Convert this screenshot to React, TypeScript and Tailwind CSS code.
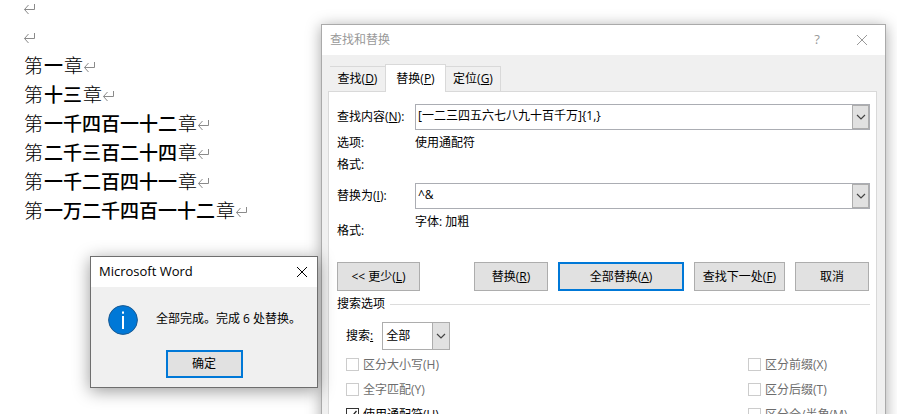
import { useState } from 'react';
import type { ReactNode } from 'react';

// each part is [text, bold]
const lines: [string, boolean][][] = [
  [],
  [],
  [['第', false], ['一', true], ['章', false]],
  [['第', false], ['十三', true], ['章', false]],
  [['第', false], ['一千四百一十二', true], ['章', false]],
  [['第', false], ['二千三百二十四', true], ['章', false]],
  [['第', false], ['一千二百四十一', true], ['章', false]],
  [['第', false], ['一万二千四百一十二', true], ['章', false]],
];

const leftOptions = [
  { id: 'case', label: '区分大小写(H)', disabled: true },
  { id: 'whole', label: '全字匹配(Y)', disabled: true },
  { id: 'wildcards', label: '使用通配符(U)', disabled: false },
];

const rightOptions = [
  { id: 'prefix', label: '区分前缀(X)', disabled: true },
  { id: 'suffix', label: '区分后缀(T)', disabled: true },
  { id: 'width', label: '区分全/半角(M)', disabled: true },
];

function ReturnMark() {
  return (
    <svg className="w-3 h-3 shrink-0" viewBox="0 0 12 12" fill="none" stroke="#8a8a8a">
      <path d="M10.5 1V6.5H0.5M4.5 2L0.5 6.5L4.5 11" />
    </svg>
  );
}

function CloseIcon() {
  return (
    <svg className="w-3 h-3" viewBox="0 0 12 12" fill="none" stroke="currentColor">
      <path d="M1 1L11 11M11 1L1 11" />
    </svg>
  );
}

function Chevron() {
  return (
    <svg className="w-2.5 h-2.5" viewBox="0 0 10 10" fill="none" stroke="#444" strokeWidth="1.2">
      <path d="M1 3L5 7L9 3" />
    </svg>
  );
}

function PushButton({ className, primary, children }: { className: string; primary?: boolean; children: ReactNode }) {
  return (
    <button
      className={`${className} h-[29px] bg-[#e1e1e1] whitespace-nowrap ${primary ? 'border-2 border-[#0078d7]' : 'border border-[#adadad]'}`}
    >
      {children}
    </button>
  );
}

function ComboBox({ id, value, onChange }: { id: string; value: string; onChange: (v: string) => void }) {
  return (
    <div className="flex h-[26px] border border-[#abadb3] bg-white">
      <input
        id={id}
        type="text"
        value={value}
        onChange={(e) => onChange(e.target.value)}
        className="flex-1 min-w-0 px-0.5 pb-0.5 outline-none"
      />
      <button
        aria-label="展开列表"
        className="w-[17px] flex items-center justify-center bg-[#e1e1e1] border border-[#adadad]"
      >
        <Chevron />
      </button>
    </div>
  );
}

function CheckOption({ id, label, disabled }: { id: string; label: string; disabled: boolean }) {
  return (
    <div className="flex items-center gap-1 h-[25px]">
      <span className="relative flex">
        <input
          id={id}
          type="checkbox"
          disabled={disabled}
          defaultChecked={!disabled}
          className="peer appearance-none w-[13px] h-[13px] bg-white border border-[#333] disabled:border-[#ccc]"
        />
        <svg
          className="absolute inset-0 hidden peer-checked:block pointer-events-none"
          viewBox="0 0 13 13"
          fill="none"
          stroke="#222"
          strokeWidth="1.3"
        >
          <path d="M2.5 6.5L5 9.5L10.5 3" />
        </svg>
      </span>
      <label htmlFor={id} className={disabled ? 'text-[#6d6d6d]' : 'text-black'}>
        {label}
      </label>
    </div>
  );
}

function FindReplaceDialog() {
  const [findText, setFindText] = useState('[一二三四五六七八九十百千万]{1,}');
  const [replaceText, setReplaceText] = useState('^&');

  return (
    <section
      role="dialog"
      aria-labelledby="find-title"
      className="absolute left-[321px] right-[11px] top-6 border border-[#aaa] bg-[#f0f0f0] shadow-[0_2px_14px_rgba(0,0,0,0.35)]"
    >
      <header className="flex items-center h-[30px] bg-white pl-2 pr-[17px] text-[#999]">
        <h2 id="find-title" className="flex-1">查找和替换</h2>
        <button aria-label="帮助" className="w-6 mr-[27px] text-[13px]">?</button>
        <button aria-label="关闭"><CloseIcon /></button>
      </header>

      <div className="pl-1.5 pr-2 pt-[9px] pb-2">
        <div role="tablist" className="flex items-end pl-0.5">
          <button role="tab" aria-selected="false" className="w-[55px] h-[25px] border-t border-[#d9d9d9]">
            查找(<u>D</u>)
          </button>
          <button
            role="tab"
            aria-selected="true"
            className="relative w-[61px] h-7 -mb-px bg-white border border-b-0 border-[#d9d9d9]"
          >
            替换(<u>P</u>)
          </button>
          <button role="tab" aria-selected="false" className="w-[55px] h-[25px] border-t border-r border-[#d9d9d9]">
            定位(<u>G</u>)
          </button>
        </div>

        <div role="tabpanel" className="bg-white border border-[#d9d9d9] pl-2 pr-1.5 pt-3 pb-6">
          <div className="grid grid-cols-[78px_1fr] items-center">
            <label htmlFor="find-text">查找内容(<u>N</u>):</label>
            <ComboBox id="find-text" value={findText} onChange={setFindText} />
            <span className="leading-[25px]">选项:</span>
            <span className="leading-[25px]">使用通配符</span>
            <span className="leading-5">格式:</span>
          </div>

          <div className="grid grid-cols-[78px_1fr] items-center mt-2">
            <label htmlFor="replace-text">替换为(<u>I</u>):</label>
            <ComboBox id="replace-text" value={replaceText} onChange={setReplaceText} />
            <span className="leading-5 pt-3">格式:</span>
            <span className="leading-5 pb-1.5">字体: 加粗</span>
          </div>

          <div className="flex gap-2.5 mt-[21px] pr-px">
            <PushButton className="w-[83px] mr-auto">&lt;&lt; 更少(<u>L</u>)</PushButton>
            <PushButton className="w-[74px]">替换(<u>R</u>)</PushButton>
            <PushButton className="w-[126px]" primary>全部替换(<u>A</u>)</PushButton>
            <PushButton className="w-[91px]">查找下一处(<u>F</u>)</PushButton>
            <PushButton className="w-[74px]">取消</PushButton>
          </div>

          <div className="flex items-center gap-[5px] mt-[3px]">
            <h3 className="leading-5">搜索选项</h3>
            <hr className="flex-1 border-[#dcdcdc]" />
          </div>

          <div className="pl-[9px] mt-2">
            <div className="flex items-center gap-[9px]">
              <label htmlFor="direction">搜索<u>:</u></label>
              <div className="relative w-[68px] h-7">
                <select
                  id="direction"
                  className="appearance-none w-full h-full bg-white border border-[#adadad] pl-[3px] outline-none"
                >
                  <option>全部</option>
                  <option>向下</option>
                  <option>向上</option>
                </select>
                <span className="absolute inset-y-0 right-0 w-[18px] flex items-center justify-center bg-[#e1e1e1] border border-[#adadad] pointer-events-none">
                  <Chevron />
                </span>
              </div>
            </div>

            <div className="flex justify-between mt-0.5">
              <div>
                {leftOptions.map((o) => <CheckOption key={o.id} {...o} />)}
              </div>
              <div className="w-[122px]">
                {rightOptions.map((o) => <CheckOption key={o.id} {...o} />)}
              </div>
            </div>
          </div>
        </div>
      </div>
    </section>
  );
}

function MessageBox() {
  return (
    <section
      role="alertdialog"
      aria-labelledby="msg-title"
      className="absolute left-[90px] top-64 w-[228px] border border-[#6e6e6e] bg-[#f0f0f0] shadow-[0_3px_16px_rgba(0,0,0,0.4)]"
    >
      <header className="flex items-center justify-between h-[30px] bg-white pl-2 pr-[9px]">
        <h2 id="msg-title" className="text-[13px]">Microsoft Word</h2>
        <button aria-label="关闭"><CloseIcon /></button>
      </header>
      <div className="flex items-start gap-[18px] pl-[17px] pt-[18px]">
        <svg className="w-[30px] h-[30px] shrink-0" viewBox="0 0 30 30">
          <circle cx="15" cy="15" r="14.4" fill="#0078d7" stroke="#1b5a92" strokeWidth="1" />
          <rect x="14" y="6.5" width="2" height="2.2" fill="#fff" />
          <rect x="14" y="11" width="2" height="13" fill="#fff" />
        </svg>
        <p className="leading-7 whitespace-nowrap">全部完成。完成 6 处替换。</p>
      </div>
      <div className="flex justify-center pt-[15px] pb-[9px]">
        <button className="w-[77px] h-7 bg-[#e1e1e1] border-2 border-[#0078d7]">确定</button>
      </div>
    </section>
  );
}

export default function App() {
  return (
    <div className="relative h-screen overflow-hidden bg-white text-black text-[12px] font-['Open_Sans','Noto_Sans_CJK_SC',sans-serif]">
      <main className="pl-6 text-[19px] leading-[29px]">
        <div className="-mt-1.5">
          {lines.map((parts, i) => (
            <p key={i} className="flex items-center gap-px h-[29px]">
              {parts.map(([text, bold], j) => (
                <span key={j} className={bold ? 'font-medium' : 'font-light'}>{text}</span>
              ))}
              <ReturnMark />
            </p>
          ))}
        </div>
      </main>

      <FindReplaceDialog />
      <MessageBox />
    </div>
  );
}
